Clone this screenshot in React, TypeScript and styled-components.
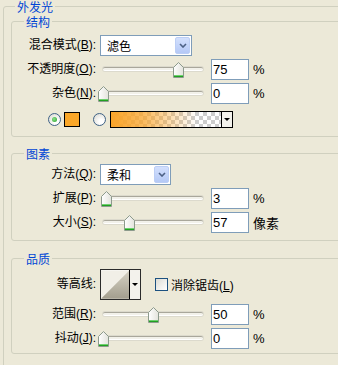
import styled, { createGlobalStyle } from 'styled-components'

const GlobalStyle = createGlobalStyle`
  html, body {
    margin: 0;
    padding: 0;
    background: #ece9d8;
  }
  body {
    font-family: "Liberation Sans", "Noto Sans CJK SC", sans-serif;
    font-size: 12px;
    color: #000;
  }
`

const Page = styled.div`
  width: 338px;
  height: 365px;
  overflow: hidden;
  padding-left: 3px;
  box-sizing: border-box;
`

const Outer = styled.fieldset`
  margin: 0;
  padding: 0 0 30px 7px;
  width: 420px;
  min-width: 0;
  border: 1px solid #d0d0bf;
  border-radius: 3px;
`

const Group = styled.fieldset<{ $mt: number; $pt: number; $pb: number }>`
  margin: ${(p) => p.$mt}px 0 0 0;
  padding: ${(p) => p.$pt}px 0 ${(p) => p.$pb}px 0;
  width: 400px;
  min-width: 0;
  border: 1px solid #d0d0bf;
  border-radius: 3px;
`

const Title = styled.legend<{ $ml: number }>`
  margin-left: ${(p) => p.$ml}px;
  padding: 0 2px;
  font-family: "Noto Sans CJK SC", sans-serif;
  font-size: 12px;
  line-height: 13px;
  height: 13px;
  color: #0046d5;
`

const Row = styled.div<{ $h: number; $pl?: number }>`
  display: flex;
  align-items: center;
  height: ${(p) => p.$h}px;
  padding-left: ${(p) => p.$pl ?? 0}px;
`

const Label = styled.label`
  width: 84px;
  margin-right: 4px;
  flex-shrink: 0;
  text-align: right;
  white-space: nowrap;
  font-size: 12px;
  line-height: 14px;
`

const Select = styled.div<{ $w: number }>`
  width: ${(p) => p.$w}px;
  height: 21px;
  box-sizing: border-box;
  border: 1px solid #7f9db9;
  background: #fff;
  display: flex;
  align-items: center;
  padding-left: 6px;
  font-family: "Noto Sans CJK SC", sans-serif;
  font-size: 12px;
`

const DropButton = styled.span`
  margin-left: auto;
  margin-right: 1px;
  width: 15px;
  height: 17px;
  box-sizing: border-box;
  border: 1px solid #bccef5;
  border-radius: 2px;
  background: linear-gradient(#d3e0fd, #b5c9f6);
  display: flex;
  align-items: center;
  justify-content: center;
`

const Slider = styled.div`
  position: relative;
  width: 107px;
  height: 20px;
  display: flex;
  align-items: center;
  padding: 0 4px 0 3px;
  box-sizing: border-box;
  flex-shrink: 0;
`

const Track = styled.div`
  flex: 1;
  height: 2px;
  border-radius: 2px;
  background: #f2f1ea;
  border-top: 1px solid #a9a79b;
  border-bottom: 1px solid #fff;
  box-shadow: 0 0 0 1px #dcdacd;
`

const Thumb = styled.svg`
  position: absolute;
  top: 3px;
`

const NumField = styled.input`
  width: 38px;
  height: 21px;
  box-sizing: border-box;
  margin: 0 0 0 4px;
  padding: 1px 1px 0;
  border: 1px solid #7f9db9;
  background: #fff;
  font-family: "Liberation Sans", sans-serif;
  font-size: 13px;
  color: #000;
  outline: none;
`

const Unit = styled.span`
  margin-left: 4px;
  font-size: 13px;
  font-family: "Liberation Sans", "Noto Sans CJK SC", sans-serif;
`

const Radio = styled.span<{ $on?: boolean; $ml?: number }>`
  position: relative;
  width: 13px;
  height: 13px;
  margin-left: ${(p) => p.$ml ?? 0}px;
  box-sizing: border-box;
  border-radius: 50%;
  border: 1px solid #3f6286;
  background: radial-gradient(circle at 65% 70%, #fff 20%, #d6d5cc 100%);
  flex-shrink: 0;

  &::after {
    content: '';
    display: ${(p) => (p.$on ? 'block' : 'none')};
    position: absolute;
    left: 3px;
    top: 3px;
    width: 5px;
    height: 5px;
    border-radius: 50%;
    background: radial-gradient(circle at 40% 40%, #8ee08e, #21a121);
  }
`

const Swatch = styled.span`
  width: 16px;
  height: 15px;
  margin-left: 3px;
  box-sizing: border-box;
  border: 1px solid #000;
  background: #faa728;
`

const GradientBox = styled.div`
  width: 123px;
  height: 17px;
  margin-left: 4px;
  box-sizing: border-box;
  border: 1px solid #000;
  display: flex;
`

const GradientFill = styled.div`
  flex: 1;
  background:
    linear-gradient(to right, #f9a42a 0%, rgba(249, 164, 42, 0.75) 30%, rgba(249, 164, 42, 0) 78%),
    repeating-conic-gradient(#cdcdcd 0% 25%, #ffffff 0% 50%) 0 0 / 8px 8px;
`

const ArrowCell = styled.div`
  width: 10px;
  border-left: 1px solid #000;
  background: #f3f2ec;
  display: flex;
  align-items: center;
  justify-content: center;
`

const Caret = styled.span`
  width: 0;
  height: 0;
  border-left: 3px solid transparent;
  border-right: 3px solid transparent;
  border-top: 3px solid #000;
`

const ContourBox = styled.div`
  width: 41px;
  height: 31px;
  box-sizing: border-box;
  border: 1px solid #2b2b2b;
  display: flex;
  background: #fff;
`

const Check = styled.span`
  width: 13px;
  height: 13px;
  margin-left: 14px;
  box-sizing: border-box;
  border: 1px solid #1c5180;
  background: linear-gradient(135deg, #dcdcd5, #fff);
  flex-shrink: 0;
`

const CheckText = styled.span`
  margin-left: 3px;
  font-size: 12px;
`

const SliderThumb = ({ value }: { value: number }) => (
  <Thumb width="11" height="16" viewBox="0 0 11 16" style={{ left: Math.round(value * 101 - 2.5) }}>
    <defs>
      <linearGradient id="tg" x1="0" y1="0" x2="1" y2="0">
        <stop offset="0" stopColor="#ffffff" />
        <stop offset="1" stopColor="#e3e3dc" />
      </linearGradient>
    </defs>
    <path d="M0.5 5.5 L5.5 0.5 L10.5 5.5 L10.5 15.5 L0.5 15.5 Z" fill="url(#tg)" stroke="#8c9a8c" />
    <line x1="1" y1="13.5" x2="10" y2="13.5" stroke="#6fcf6f" />
    <line x1="1" y1="14.5" x2="10" y2="14.5" stroke="#21a121" />
  </Thumb>
)

const SliderRow = ({ label, value, frac, unit }: { label: React.ReactNode; value: string; frac: number; unit: string }) => (
  <Row $h={24}>
    <Label>{label}</Label>
    <Slider>
      <Track />
      <SliderThumb value={frac} />
    </Slider>
    <NumField readOnly value={value} />
    <Unit>{unit}</Unit>
  </Row>
)

const Chevron = () => (
  <svg width="8" height="5" viewBox="0 0 8 5">
    <polyline points="1,1 4,4 7,1" fill="none" stroke="#4d6185" strokeWidth="1.6" />
  </svg>
)

const ContourGraph = () => (
  <svg width="29" height="29" viewBox="0 0 29 29">
    <defs>
      <linearGradient id="cg" x1="0" y1="0" x2="0" y2="1">
        <stop offset="0" stopColor="#d6d2c4" />
        <stop offset="1" stopColor="#a39e8e" />
      </linearGradient>
    </defs>
    <rect width="29" height="29" fill="#f1efe7" />
    <polygon points="0,29 29,0 29,29" fill="url(#cg)" />
  </svg>
)

export default function App() {
  return (
    <Page>
      <GlobalStyle />
      <Outer>
        <Title $ml={4}>外发光</Title>

        <Group $mt={2} $pt={5} $pb={3}>
          <Title $ml={12}>结构</Title>
          <Row $h={24}>
            <Label>混合模式(<u>B</u>):</Label>
            <Select $w={92}>
              滤色
              <DropButton><Chevron /></DropButton>
            </Select>
          </Row>
          <SliderRow label={<>不透明度(<u>O</u>):</>} value="75" frac={0.75} unit="%" />
          <SliderRow label={<>杂色(<u>N</u>):</>} value="0" frac={0} unit="%" />
          <Row $h={28} $pl={36}>
            <Radio $on />
            <Swatch />
            <Radio $ml={13} />
            <GradientBox>
              <GradientFill />
              <ArrowCell><Caret /></ArrowCell>
            </GradientBox>
          </Row>
        </Group>

        <Group $mt={10} $pt={2} $pb={6}>
          <Title $ml={12}>图素</Title>
          <Row $h={24}>
            <Label>方法(<u>Q</u>):</Label>
            <Select $w={71}>
              柔和
              <DropButton><Chevron /></DropButton>
            </Select>
          </Row>
          <SliderRow label={<>扩展(<u>P</u>):</>} value="3" frac={0.03} unit="%" />
          <SliderRow label={<>大小(<u>S</u>):</>} value="57" frac={0.26} unit="像素" />
        </Group>

        <Group $mt={11} $pt={1} $pb={3}>
          <Title $ml={12}>品质</Title>
          <Row $h={36}>
            <Label>等高线:</Label>
            <ContourBox>
              <ContourGraph />
              <ArrowCell><Caret /></ArrowCell>
            </ContourBox>
            <Check />
            <CheckText>消除锯齿(<u>L</u>)</CheckText>
          </Row>
          <SliderRow label={<>范围(<u>R</u>):</>} value="50" frac={0.5} unit="%" />
          <SliderRow label={<>抖动(<u>J</u>):</>} value="0" frac={0} unit="%" />
        </Group>
      </Outer>
    </Page>
  )
}
